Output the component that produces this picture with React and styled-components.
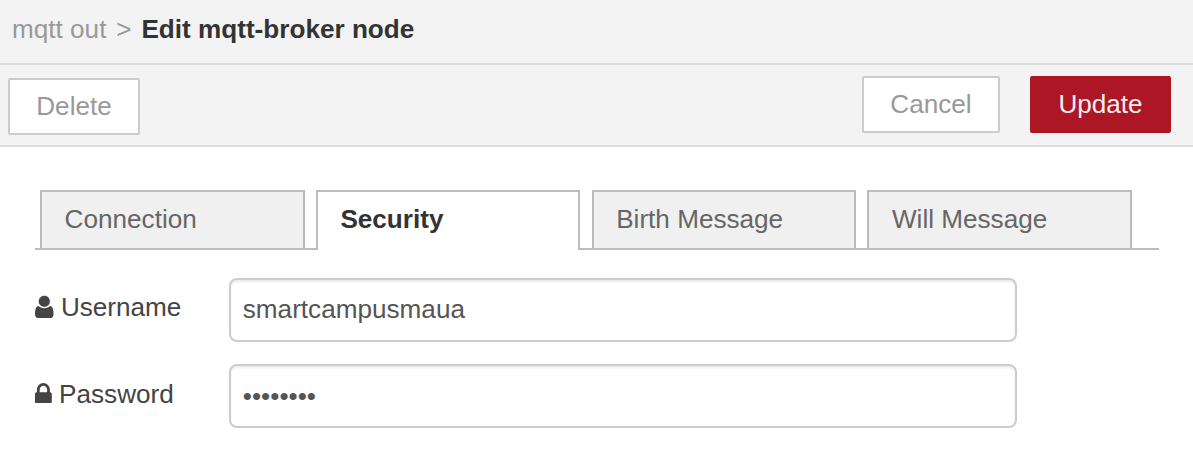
import React from "react";
import styled, { createGlobalStyle } from "styled-components";

const Global = createGlobalStyle`
  * { box-sizing: border-box; }
  body { margin: 0; background: #fff; font-family: "Liberation Sans", Arial, sans-serif; font-size: 26.13px; }
`;
const Header = styled.header`
  height: 65px; padding: 0 12px 4px; display: flex; align-items: center; gap: 9.9px; white-space: pre;
  background: #f3f3f3; border-bottom: 2px solid #ddd; color: #999;
`;
const Title = styled.strong`color: #333;`;
const Toolbar = styled.div`
  height: 82px; padding: 11px 22px 0 8px; display: flex; align-items: flex-start;
  background: #f3f3f3; border-bottom: 2px solid #ddd;
`;
const Button = styled.button`
  width: ${p => p.$w}px; height: 57px; padding: 0; margin: ${p => p.$m || "0"};
  border: 2px solid ${p => (p.$primary ? "#ad1625" : "#ccc")}; border-radius: 2px;
  background: ${p => (p.$primary ? "#ad1625" : "#fff")};
  color: ${p => (p.$primary ? "#eee" : "#999")}; font: inherit;
`;
const Tabs = styled.nav`
  margin: 43px 34px 0 35px; padding: 0 5px; height: 60px; display: flex;
  gap: 11.2px; border-bottom: 2px solid #bbb;
`;
const Tab = styled.div`
  flex: none; width: 264.6px; height: ${p => (p.$active ? 60 : 58)}px; padding: 0 22.6px;
  line-height: 54px; border: 2px solid #bbb; border-bottom: 0;
  border-radius: ${p => (p.$active ? "0 0 2px 2px" : "0")};
  background: ${p => (p.$active ? "#fff" : "#f0f0f0")};
  color: ${p => (p.$active ? "#333" : "#666")}; font-weight: ${p => (p.$active ? 700 : 400)};
`;
const Form = styled.form`padding: 28px 0 0 35px; display: grid; gap: 22px;`;
const Row = styled.div`display: flex; height: 64px;`;
const Label = styled.label`
  width: 194px; height: ${p => p.$h}px; display: flex; align-items: center; gap: 7.3px; color: #444;
`;
const Icon = styled.svg`flex: none; display: block; fill: #444; margin-bottom: ${p => p.$lift || 0}px;`;
const Input = styled.input`
  width: 788px; height: 64px; padding: 0 11.8px ${p => p.$lift || 0}px; border: 2px solid #ccc; border-radius: 8px;
  background: #fff; color: #555; font: inherit; outline: none; box-shadow: inset 0 2px 2px rgba(0,0,0,.075);
`;

const UserIcon = () => (
  <Icon width="18.6" height="24" viewBox="0 0 18.6 24">
    <path d="M3.4 11.1C5 12.6 7 13.2 9.3 13.2s4.3-.6 5.9-2.1c2.4.6 3.4 3.5 3.4 8 0 2.4-1 3.9-3 3.9H3c-2 0-3-1.5-3-3.9 0-4.5 1-7.4 3.4-8z" />
    <circle cx="9.3" cy="6.3" r="6" stroke="#fff" strokeWidth=".8" />
  </Icon>
);
const LockIcon = () => (
  <Icon $lift={2} width="16.8" height="20.5" viewBox="0 128 1152 1408">
    <path d="M320 768h512v-192q0-106-75-181t-181-75-181 75-75 181v192zM1152 864v576q0 40-28 68t-68 28h-960q-40 0-68-28t-28-68v-576q0-40 28-68t68-28h32v-192q0-184 132-316t316-132 316 132 132 316v192h32q40 0 68 28t28 68z" />
  </Icon>
);

export default function App() {
  return (
    <>
      <Global />
      <Header><span>mqtt out</span><span>&gt;</span><Title>Edit mqtt-broker node</Title></Header>
      <Toolbar>
        <Button $w={132} $m="2px auto 0 0">Delete</Button>
        <Button $w={138}>Cancel</Button>
        <Button $w={141} $m="0 0 0 30px" $primary>Update</Button>
      </Toolbar>
      <Tabs>
        <Tab>Connection</Tab><Tab $active>Security</Tab><Tab>Birth Message</Tab><Tab>Will Message</Tab>
      </Tabs>
      <Form>
        <Row><Label $h={58}><UserIcon />Username</Label><Input $lift={2} defaultValue="smartcampusmaua" /></Row>
        <Row><Label $h={60}><LockIcon />Password</Label><Input type="password" defaultValue="password" /></Row>
      </Form>
    </>
  );
}
